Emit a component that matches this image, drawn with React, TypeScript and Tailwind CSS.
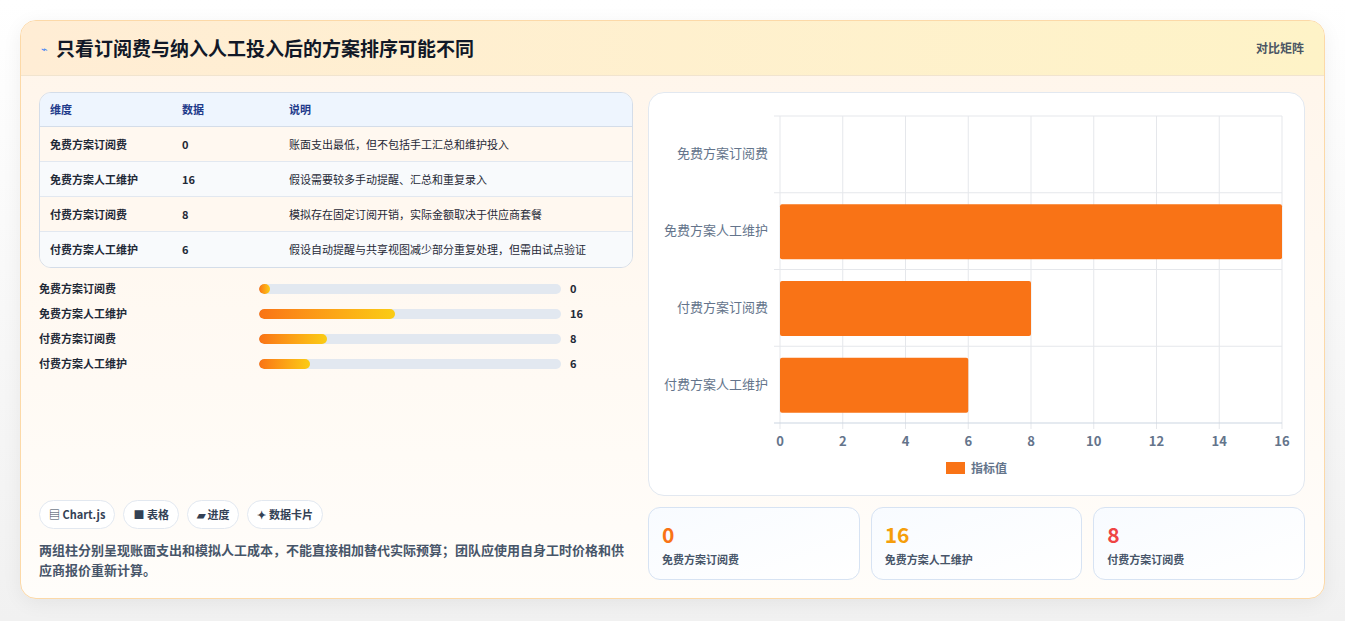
import React from 'react'

const rows = [
  { name: '免费方案订阅费', value: 0, note: '账面支出最低，但不包括手工汇总和维护投入' },
  { name: '免费方案人工维护', value: 16, note: '假设需要较多手动提醒、汇总和重复录入' },
  { name: '付费方案订阅费', value: 8, note: '模拟存在固定订阅开销，实际金额取决于供应商套餐' },
  { name: '付费方案人工维护', value: 6, note: '假设自动提醒与共享视图减少部分重复处理，但需由试点验证' },
]

const font = { fontFamily: '"Noto Sans CJK SC", "Noto Sans", sans-serif' }

function Chart() {
  // plot area in svg coords: card starts at x 649, y 92
  const x0 = 131, x1 = 633, y0 = 23, y1 = 330
  const band = (y1 - y0) / 4
  const sx = (v: number) => x0 + ((x1 - x0) * v) / 16
  return (
    <svg width="656" height="404" className="block">
      {[0, 2, 4, 6, 8, 10, 12, 14, 16].map((t) => (
        <g key={t}>
          <line x1={sx(t)} x2={sx(t)} y1={y0} y2={y1 + 6} stroke="#e5e7eb" />
          <text x={sx(t)} y={y1 + 23} textAnchor="middle" fontSize="13" fontWeight="600" fill="#64748b" style={font}>{t}</text>
        </g>
      ))}
      {[0, 1, 2, 3, 4].map((i) => (
        <line key={i} x1={x0 - 6} x2={x1} y1={y0 + band * i} y2={y0 + band * i} stroke={i === 4 ? '#cbd5e1' : '#e5e7eb'} />
      ))}
      {rows.map((r, i) => {
        const cy = y0 + band * i + band / 2
        return (
          <g key={r.name}>
            <text x={x0 - 12} y={cy + 4} textAnchor="end" fontSize="13" fill="#64748b" style={font}>{r.name}</text>
            {r.value > 0 && <rect x={x0} y={cy - 27} width={sx(r.value) - x0} height={55} rx={2} fill="#f97316" />}
          </g>
        )
      })}
      <rect x="297" y="369" width="19" height="12" fill="#f97316" />
      <text x="322" y="380" fontSize="12" fontWeight="600" fill="#64748b" style={font}>指标值</text>
    </svg>
  )
}

export default function App() {
  const stats = [
    { v: 0, c: 'text-[#f97316]', l: '免费方案订阅费' },
    { v: 16, c: 'text-[#f59e0b]', l: '免费方案人工维护' },
    { v: 8, c: 'text-[#ef4444]', l: '付费方案订阅费' },
  ]
  return (
    <div className="min-h-[621px] bg-gradient-to-b from-white to-[#f1f1f1] pt-5 px-5" style={font}>
      <div className="w-[1305px] rounded-2xl border border-[#fcd9a8] overflow-hidden shadow-[0_4px_20px_rgba(0,0,0,0.06)] bg-gradient-to-b from-[#fff5ea] to-[#fffdfa]">
        <div className="h-[55px] flex items-center justify-between px-5 bg-gradient-to-r from-[#ffedd5] to-[#fef3c7] border-b border-[#f1e4cf]">
          <div className="flex items-center gap-2">
            <span className="text-[11px] text-[#3b82f6]">⌁</span>
            <span className="text-[19px] font-bold text-[#111827]">只看订阅费与纳入人工投入后的方案排序可能不同</span>
          </div>
          <span className="text-[12px] font-semibold text-[#4b5563]">对比矩阵</span>
        </div>
        <div className="flex gap-[15px] pl-[18px] pr-[19px] pt-[16px] pb-[18px]">
          <div className="w-[595px] flex flex-col">
            <div className="rounded-xl border border-[#d4dde9] overflow-hidden text-[11px] text-[#1f2937]">
              <div className="flex h-[34px] items-center bg-[#eef5fe] border-b border-[#d4dde9] font-semibold text-[#1e3a8a]">
                <div className="w-[142px] pl-[10px]">维度</div>
                <div className="w-[107px]">数据</div>
                <div>说明</div>
              </div>
              {rows.map((r, i) => (
                <div key={r.name} className={`flex h-[35px] items-center font-semibold ${i < 3 ? 'border-b border-[#e2e8f0]' : ''} ${i % 2 === 0 ? 'bg-[#fff8f0]' : 'bg-[#f8fafc]'}`}>
                  <div className="w-[142px] pl-[10px]">{r.name}</div>
                  <div className="w-[107px]">{r.value}</div>
                  <div className="font-normal">{r.note}</div>
                </div>
              ))}
            </div>
            <div className="mt-[12px] flex flex-col gap-[8px]">
              {rows.map((r) => (
                <div key={r.name} className="flex items-center h-[17px] text-[11px] font-semibold text-[#1f2937]">
                  <div className="w-[220px]">{r.name}</div>
                  <div className="w-[302px] h-[10px] rounded-full bg-[#e2e8f0] overflow-hidden">
                    <div className="h-full rounded-full bg-gradient-to-r from-[#f97316] to-[#facc15]" style={{ width: `${Math.max(3.5, (r.value / 16) * 45)}%` }} />
                  </div>
                  <div className="ml-[9px] font-bold">{r.value}</div>
                </div>
              ))}
            </div>
            <div className="mt-auto flex gap-[8px] text-[11px] font-semibold text-[#334155]">
              {['▤ Chart.js', '■ 表格', '▰ 进度', '✦ 数据卡片'].map((t) => (
                <span key={t} className="h-[29px] px-[9px] flex items-center rounded-full border border-[#e2e8f0] bg-white">{t}</span>
              ))}
            </div>
            <p className="mt-[11px] text-[13px] leading-[20px] font-semibold text-[#475569]">
              两组柱分别呈现账面支出和模拟人工成本，不能直接相加替代实际预算；团队应使用自身工时价格和供应商报价重新计算。
            </p>
          </div>
          <div className="w-[657px] flex flex-col gap-[11px]">
            <div className="h-[404px] rounded-2xl border border-[#e2e8f0] bg-white overflow-hidden">
              <Chart />
            </div>
            <div className="grid grid-cols-3 gap-[11px]">
              {stats.map((s) => (
                <div key={s.l} className="h-[73px] rounded-xl border border-[#d7e3f3] bg-gradient-to-br from-[#f8fbff] to-white px-[13px] pt-[12px]">
                  <div className={`text-[21px] leading-[28px] font-bold ${s.c}`}>{s.v}</div>
                  <div className="mt-[3px] text-[11px] font-semibold text-[#475569]">{s.l}</div>
                </div>
              ))}
            </div>
          </div>
        </div>
      </div>
    </div>
  )
}
